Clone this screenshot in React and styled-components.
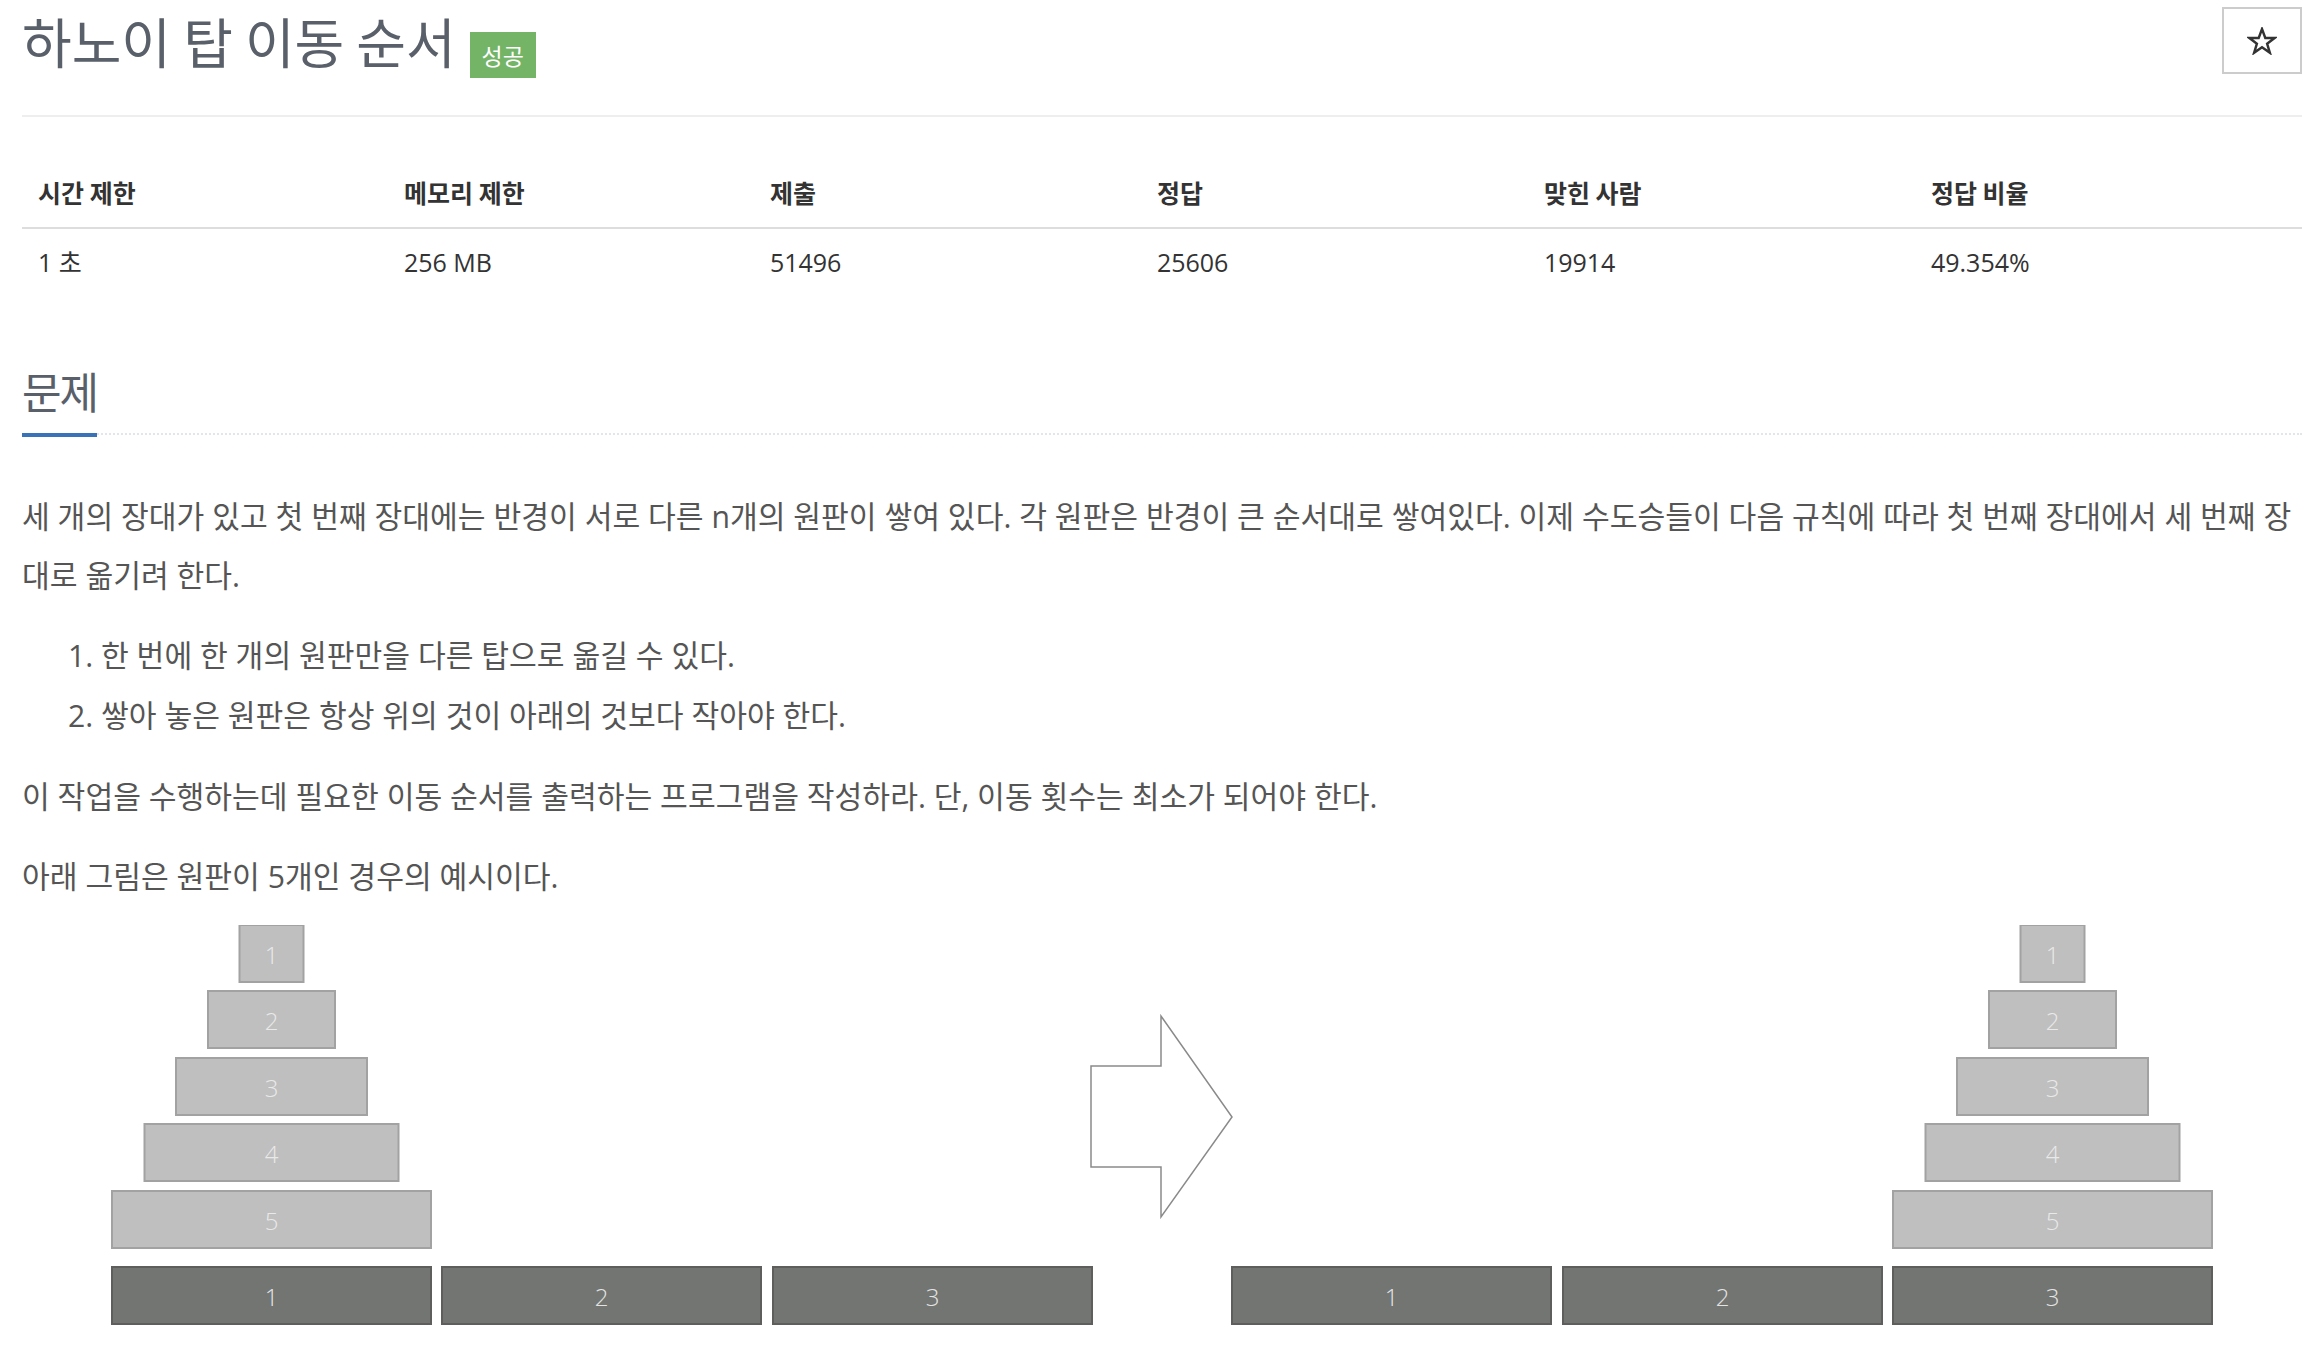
import React from "react";
import styled, { createGlobalStyle } from "styled-components";

const GlobalStyle = createGlobalStyle`
  html, body {
    margin: 0;
    padding: 0;
    background: #fff;
  }
  body {
    font-family: "Open Sans", "Noto Sans CJK KR", sans-serif;
    color: #555;
  }
`;

const info = [
  { label: "시간 제한", value: "1 초", width: 16 },
  { label: "메모리 제한", value: "256 MB", width: 16 },
  { label: "제출", value: "51496", width: 17 },
  { label: "정답", value: "25606", width: 17 },
  { label: "맞힌 사람", value: "19914", width: 17 },
  { label: "정답 비율", value: "49.354%", width: 17 },
];

const diskWidths = [64, 127, 191, 254, 319];
const diskTops = [0, 66, 133, 199, 266];

function Tower({ cx }) {
  return diskWidths.map((w, i) => (
    <g key={i}>
      <rect
        x={cx - w / 2}
        y={diskTops[i]}
        width={w}
        height={57}
        fill="#bfbfbf"
        stroke="#a2a2a2"
        strokeWidth="2"
      />
      <DiskLabel x={cx} y={diskTops[i] + 29} textAnchor="middle" dominantBaseline="central">
        {i + 1}
      </DiskLabel>
    </g>
  ));
}

function Bases({ xs }) {
  return xs.map((x, i) => (
    <g key={i}>
      <rect x={x} y={342} width={319} height={57} fill="#737572" stroke="#5e5f5d" strokeWidth="2" />
      <BaseLabel x={x + 159.5} y={371} textAnchor="middle" dominantBaseline="central">
        {i + 1}
      </BaseLabel>
    </g>
  ));
}

export default function App() {
  return (
    <Page>
      <GlobalStyle />
      <Header>
        <TitleRow>
          <Title>하노이 탑 이동 순서</Title>
          <Badge>성공</Badge>
        </TitleRow>
        <StarButton aria-label="즐겨찾기">
          <svg width="30" height="28" viewBox="0 0 30 28">
            <polygon
              points="15,2 18.3,11 27.6,11 20.1,16.7 22.9,25.8 15,20.2 7.1,25.8 9.9,16.7 2.4,11 11.7,11"
              fill="none"
              stroke="#333"
              strokeWidth="2.4"
              strokeLinejoin="miter"
            />
          </svg>
        </StarButton>
      </Header>

      <InfoTable>
        <thead>
          <tr>
            {info.map((c) => (
              <Th key={c.label} $w={c.width}>
                {c.label}
              </Th>
            ))}
          </tr>
        </thead>
        <tbody>
          <tr>
            {info.map((c) => (
              <Td key={c.label}>{c.value}</Td>
            ))}
          </tr>
        </tbody>
      </InfoTable>

      <Headline>
        <SectionTitle>문제</SectionTitle>
      </Headline>

      <Description>
        <p>
          세 개의 장대가 있고 첫 번째 장대에는 반경이 서로 다른 n개의 원판이 쌓여 있다. 각 원판은
          반경이 큰 순서대로 쌓여있다. 이제 수도승들이 다음 규칙에 따라 첫 번째 장대에서 세 번째
          장대로 옮기려 한다.
        </p>
        <ol>
          <li>한 번에 한 개의 원판만을 다른 탑으로 옮길 수 있다.</li>
          <li>쌓아 놓은 원판은 항상 위의 것이 아래의 것보다 작아야 한다.</li>
        </ol>
        <p>
          이 작업을 수행하는데 필요한 이동 순서를 출력하는 프로그램을 작성하라. 단, 이동 횟수는
          최소가 되어야 한다.
        </p>
        <p>아래 그림은 원판이 5개인 경우의 예시이다.</p>
      </Description>

      <Figure viewBox="0 0 2280 405" width="2280" height="405">
        <Tower cx={249.5} />
        <Bases xs={[90, 420, 751]} />
        <polygon
          points="1069,141 1139,141 1139,91 1210,192 1139,292 1139,242 1069,242"
          fill="#fff"
          stroke="#8a8a8a"
          strokeWidth="1.5"
        />
        <Bases xs={[1210, 1541, 1871]} />
        <Tower cx={2030.5} />
      </Figure>
    </Page>
  );
}

const Page = styled.div`
  padding: 0 20px 40px 22px;
`;

const Header = styled.div`
  display: flex;
  justify-content: space-between;
  align-items: flex-start;
  height: 115px;
  border-bottom: 2px solid #eee;
`;

const TitleRow = styled.div`
  display: flex;
  align-items: flex-start;
  gap: 14px;
  margin-top: 3px;
`;

const Title = styled.h1`
  margin: 0;
  font-family: "Noto Sans CJK KR", "Open Sans", sans-serif;
  font-weight: 400;
  font-size: 54px;
  line-height: 76px;
  color: #5a606a;
`;

const Badge = styled.span`
  display: flex;
  align-items: center;
  justify-content: center;
  width: 66px;
  height: 46px;
  margin-top: 29px;
  background: #74b467;
  color: #fff;
  font-family: "Noto Sans CJK KR", sans-serif;
  font-size: 23px;
`;

const StarButton = styled.button`
  display: flex;
  align-items: center;
  justify-content: center;
  margin-top: 7px;
  width: 80px;
  height: 67px;
  background: #fff;
  border: 2px solid #ccc;
  padding: 0;
  cursor: pointer;
`;

const InfoTable = styled.table`
  width: 100%;
  margin-top: 44px;
  border-collapse: collapse;
  table-layout: fixed;
  color: #333;
`;

const Th = styled.th`
  width: ${(p) => p.$w}%;
  text-align: left;
  padding: 10px 16px 14px;
  line-height: 42px;
  font-family: "Noto Sans CJK KR", sans-serif;
  font-size: 25px;
  font-weight: 700;
  border-bottom: 2px solid #ddd;
`;

const Td = styled.td`
  padding: 12px 16px;
  line-height: 42px;
  font-size: 25px;
`;

const Headline = styled.div`
  display: flex;
  margin-top: 71px;
  margin-bottom: 52px;
  border-bottom: 2px dotted #e2e5e9;
`;

const SectionTitle = styled.h2`
  margin: 0 0 -4px 0;
  padding-bottom: 19px;
  font-family: "Noto Sans CJK KR", sans-serif;
  font-weight: 400;
  font-size: 43px;
  line-height: 48px;
  letter-spacing: -2px;
  color: #5a606a;
  border-bottom: 4px solid #3873b8;
`;

const Description = styled.div`
  font-size: 30.2px;
  line-height: 59px;
  color: #555;

  p {
    margin: 0 0 21px;
  }

  ol {
    margin: 0 0 21px;
    padding-left: 79px;
  }

  li {
    line-height: 60px;
  }
`;

const Figure = styled.svg`
  display: block;
  margin-top: -2px;
`;

const DiskLabel = styled.text`
  font-family: "Open Sans", sans-serif;
  font-weight: 300;
  font-size: 24px;
  fill: #e9e9e9;
`;

const BaseLabel = styled.text`
  font-family: "Open Sans", sans-serif;
  font-weight: 300;
  font-size: 24px;
  fill: #e4e4e4;
`;
